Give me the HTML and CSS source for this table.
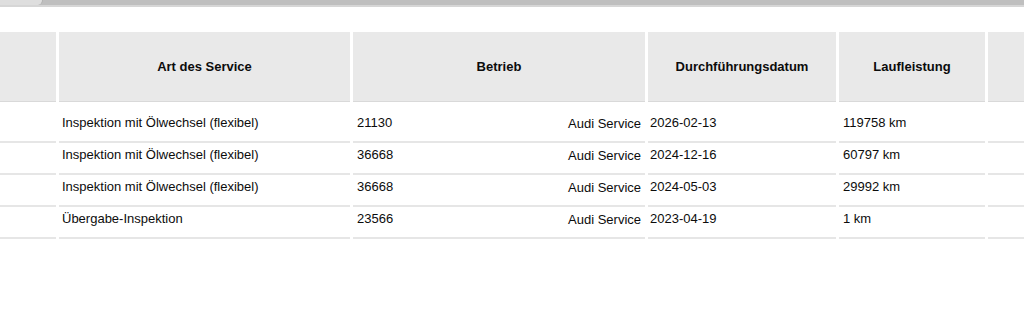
FILE: index.html
```html
<!DOCTYPE html>
<html lang="de">
<head>
<meta charset="utf-8">
<title>Serviceheft</title>
<link rel="stylesheet" href="styles.css">
</head>
<body>
<div class="topbar"><div class="tab"></div></div>
<div class="table">
  <div class="row head">
    <div class="cell"></div>
    <div class="cell">Art des Service</div>
    <div class="cell">Betrieb</div>
    <div class="cell">Durchführungsdatum</div>
    <div class="cell">Laufleistung</div>
    <div class="cell"></div>
  </div>
  <div class="row body first">
    <div class="cell"></div>
    <div class="cell art">Inspektion mit Ölwechsel (flexibel)</div>
    <div class="cell betrieb"><span>21130</span><span class="name">Audi Service</span></div>
    <div class="cell date">2026-02-13</div>
    <div class="cell">119758 km</div>
    <div class="cell"></div>
  </div>
  <div class="row body">
    <div class="cell"></div>
    <div class="cell art">Inspektion mit Ölwechsel (flexibel)</div>
    <div class="cell betrieb"><span>36668</span><span class="name">Audi Service</span></div>
    <div class="cell date">2024-12-16</div>
    <div class="cell">60797 km</div>
    <div class="cell"></div>
  </div>
  <div class="row body">
    <div class="cell"></div>
    <div class="cell art">Inspektion mit Ölwechsel (flexibel)</div>
    <div class="cell betrieb"><span>36668</span><span class="name">Audi Service</span></div>
    <div class="cell date">2024-05-03</div>
    <div class="cell">29992 km</div>
    <div class="cell"></div>
  </div>
  <div class="row body">
    <div class="cell"></div>
    <div class="cell art">Übergabe-Inspektion</div>
    <div class="cell betrieb"><span>23566</span><span class="name">Audi Service</span></div>
    <div class="cell date">2023-04-19</div>
    <div class="cell">1 km</div>
    <div class="cell"></div>
  </div>
</div>
</body>
</html>
```
FILE: styles.css
```css
html, body {
  margin: 0;
  padding: 0;
  background: #ffffff;
  overflow: hidden;
}
body {
  font-family: "Liberation Sans", Arial, sans-serif;
  font-size: 13px;
  color: #0c0c0c;
  width: 1024px;
  height: 315px;
}
.topbar {
  height: 5px;
  background: #bfbfbf;
  border-bottom: 2px solid #d6d6d6;
  display: flex;
}
.tab {
  width: 42px;
  height: 5px;
  background: #dedede;
  border-right: 1px solid #b0b0b0;
  border-bottom-right-radius: 5px;
}
.table {
  margin-top: 25px;
}
.row {
  display: grid;
  grid-template-columns: 56px 291px 292px 188px 146px 36px;
  column-gap: 3px;
}
.head .cell {
  background: #e9e9e9;
  height: 70px;
  box-sizing: border-box;
  border-bottom: 1px solid #d9d9d9;
  display: flex;
  align-items: center;
  justify-content: center;
  font-weight: bold;
  color: #0c0c0c;
}
.body .cell {
  box-sizing: border-box;
  height: 32px;
  padding: 4px 4px 0 4px;
  line-height: 16px;
  border-bottom: 2px solid #e6e6e6;
  white-space: nowrap;
}
.body.first .cell {
  height: 41px;
  padding-top: 13px;
}
.body .art {
  padding-left: 3px;
}
.body .date {
  padding-left: 2px;
}
.body .betrieb {
  display: flex;
  justify-content: space-between;
}
.body .betrieb .name {
  padding-top: 1px;
}
```
